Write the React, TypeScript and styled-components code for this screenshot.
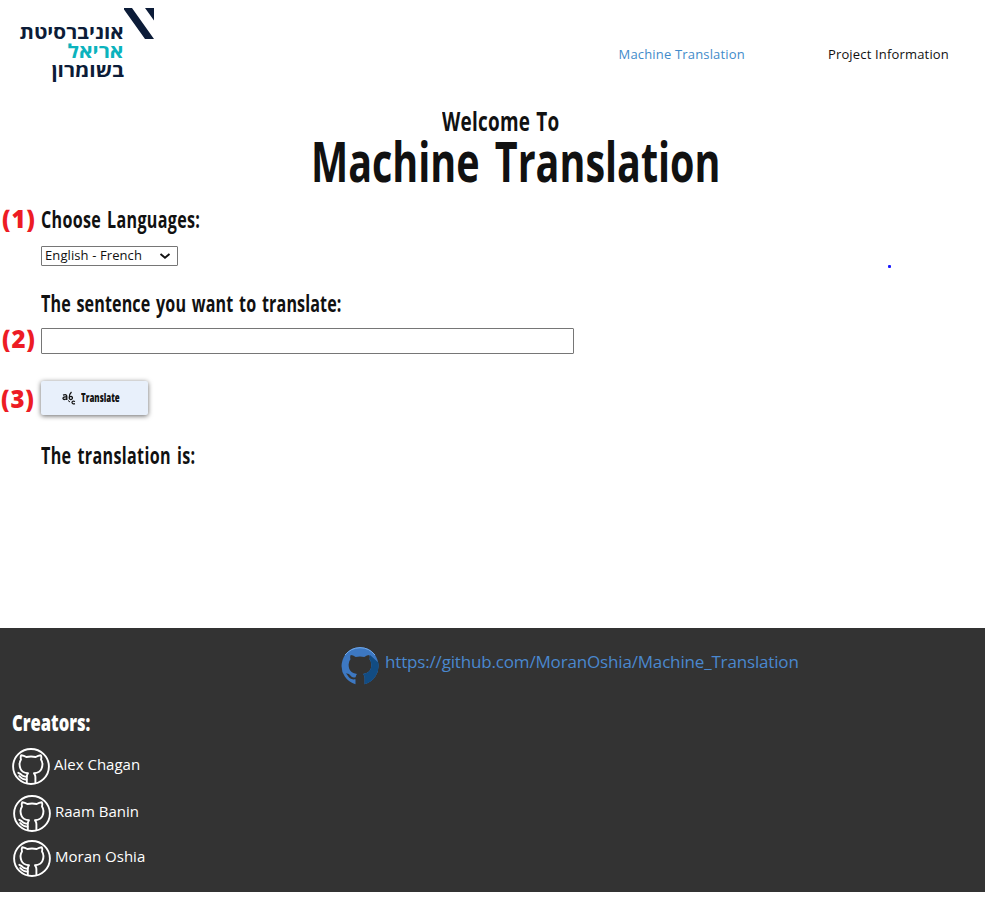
import React from "react";
import styled, { createGlobalStyle } from "styled-components";

const GlobalStyle = createGlobalStyle`
  * { box-sizing: border-box; }
  body { margin: 0; background: #fff; color: #111; font-family: "Open Sans", sans-serif; }
  a { text-decoration: none; color: inherit; }
  h1, h2, h3, p, ul { margin: 0; padding: 0; }
`;

const Page = styled.div`
  width: 985px;
  height: 899px;
  overflow: hidden;
`;

const Header = styled.header`
  display: flex;
  justify-content: space-between;
  height: 101px;
  padding: 8px 36px 0 20px;
`;

const Logo = styled.a`
  display: flex;
  width: 134px;
  height: 76px;
`;

const LogoWords = styled.div`
  display: flex;
  flex-direction: column;
  align-items: flex-end;
  width: 104px;
  padding-top: 15px;
`;

const LogoWord = styled.span<{ $teal?: boolean; $scale: number }>`
  height: 19px;
  font: 700 19px/19px "Open Sans", "DejaVu Sans", sans-serif;
  direction: rtl;
  white-space: nowrap;
  color: ${(p) => (p.$teal ? "#0bb3bd" : "#0c1c38")};
  transform: scaleX(${(p) => p.$scale});
  transform-origin: right;
`;

const Nav = styled.nav`
  display: flex;
  gap: 83px;
  padding-top: 37px;
`;

const NavLink = styled.a<{ $active?: boolean }>`
  font-size: 13px;
  line-height: 18px;
  letter-spacing: 0.17px;
  color: ${(p) => (p.$active ? "#428bca" : "#111")};
`;

const Display = styled.span<{
  $size: number;
  $scale: number;
  $heavy?: boolean;
  $tracking?: number;
  $wordGap?: number;
}>`
  display: block;
  width: max-content;
  font-size: ${(p) => p.$size}px;
  font-weight: ${(p) => (p.$heavy ? 800 : 700)};
  line-height: 1;
  letter-spacing: ${(p) => p.$tracking ?? 0}px;
  word-spacing: ${(p) => p.$wordGap ?? 0}px;
  white-space: nowrap;
  transform: scaleX(${(p) => p.$scale});
  transform-origin: left;
`;

const Welcome = styled.h2`
  height: 31px;
  padding: 6px 0 0 442px;
`;

const Title = styled.h1`
  height: 71px;
  padding-left: 311px;
`;

const Form = styled.main`
  display: grid;
  grid-template-columns: 41px 1fr;
  grid-template-rows: 43px 41px 36px 53px 63px 1fr;
  height: 425px;
  padding-top: 5px;
`;

const Marker = styled.span<{ $left?: number; $top?: number }>`
  padding: ${(p) => p.$top ?? 0}px 0 0 ${(p) => p.$left ?? 2}px;
  font-size: 24px;
  font-weight: 800;
  line-height: 22px;
  letter-spacing: 0.8px;
  color: #ed1c24;
  white-space: nowrap;
`;

const Label = styled.h3`
  grid-column: 2;
`;

const SelectRow = styled.div`
  grid-column: 2;
  display: flex;
  justify-content: space-between;
  padding-right: 94px;
`;

const Picker = styled.button`
  display: flex;
  align-items: center;
  justify-content: space-between;
  width: 137px;
  height: 20px;
  margin-top: -5px;
  padding: 0 6px 2px 3px;
  border: 1px solid #767676;
  border-radius: 1px;
  background: #fff;
  color: #111;
  font: 13px/18px "Open Sans", sans-serif;
  letter-spacing: 0.1px;
`;

const Dot = styled.i`
  width: 3px;
  height: 3px;
  margin-top: 14px;
  border-radius: 1px;
  background: #1a1aff;
`;

const SentenceInput = styled.input`
  width: 533px;
  height: 26px;
  border: 1px solid #767676;
  border-radius: 1px;
  background: #fff;
`;

const TranslateButton = styled.button`
  display: flex;
  align-items: center;
  gap: 5px;
  width: 107px;
  height: 34px;
  padding: 0 0 0 21px;
  border: 0;
  border-radius: 2px;
  background: #e8f0fb;
  box-shadow: 0 1px 5px rgba(0, 0, 0, 0.6);
  color: #111;
  font-family: "Open Sans", sans-serif;
`;

const Footer = styled.footer`
  height: 264px;
  padding: 19px 0 0 12px;
  background: #333;
  color: #fff;
`;

const RepoLink = styled.a`
  display: flex;
  gap: 6px;
  margin-left: 329px;
  height: 64px;
  font-size: 17px;
  line-height: 30px;
  letter-spacing: -0.165px;
  color: #4a88cf;
`;

const Creators = styled.ul`
  padding-top: 14px;
  list-style: none;
`;

const Creator = styled.li<{ $indent?: number; $height: number }>`
  display: flex;
  gap: 4px;
  height: ${(p) => p.$height}px;
  padding-left: ${(p) => p.$indent ?? 0}px;
  font-size: 15px;
  line-height: 32px;
`;

const LogoMark = () => (
  <svg width="30" height="32" viewBox="0 0 30 32" fill="#0c1c38">
    <path d="M-1 0H8L30 31H21ZM21 0H30V12.5Z" />
  </svg>
);

const Octocat = () => (
  <svg width="38" height="38" viewBox="0 0 38 38" fill="none" stroke="#fff" strokeWidth="1.9" strokeLinejoin="round" strokeLinecap="round">
    <ellipse cx="19" cy="18.5" rx="17.9" ry="17.5" />
    <path d="M14.8 35V29Q14.8 27 16 25.3C12 24.8 9.5 23.5 8.6 21Q6.3 15.5 9 11.5Q8.2 9 9.2 7.2Q12 7.6 14.3 9Q19 8 23.7 9Q26 7.6 28.8 7.2Q29.8 9 29 11.5Q31.7 15.5 29.4 21C28.5 23.5 26 24.8 22 25.3Q23.4 27 23.4 29V35" />
    <path d="M6.3 24.8Q8.5 25.6 9.8 27.2Q11.5 29 14.5 28.5M7.2 28Q10.5 31.8 14.5 31.6" />
  </svg>
);

const OctocatBadge = () => (
  <svg width="38" height="38" viewBox="0 0 38 38">
    <path fill="#3d78c2" d="M19 0A19 19 0 0 0 14.5 37.3V32.3C10 33 8.2 31.4 6.7 28.6Q5.8 27 4.9 26.5Q7.8 25.9 9.6 28.8Q11.2 31.3 14.6 30.2Q15 28 16 27C10.7 26 7.6 23.5 7.6 17.5Q7.6 14 9.5 12.2Q8.7 9.7 9.8 8Q12 8.1 14.7 10Q19 8.8 23.3 10Q26 8.1 28.2 8Q29.3 9.7 28.5 12.2Q30.4 14 30.4 17.5C30.4 23.5 27.3 26 22 27Q23.6 28.5 23.6 31V37.3A19 19 0 0 0 19 0Z" />
    <path fill="#124c83" d="M29 8L37.3 15.5A19 19 0 0 1 23.6 37.3V31Q23.6 28.5 22 27C27.3 26 30.4 23.5 30.4 17.5Q30.4 14 28.5 12.2Q29.2 10 29 8Z" />
    <path fill="none" stroke="#73aaea" strokeWidth="1" d="M4 8Q10 .8 19 .7T34 8" />
  </svg>
);

const TranslateIcon = () => (
  <svg width="14" height="14" viewBox="0 0 14 14" fill="none" stroke="#111" strokeWidth="1.3">
    <path d="M1 4.2Q4.8 2.8 4.8 5.5V9M4.8 6Q1 5.5 1 7.5Q1.6 9.5 4.8 7.5M9.5 1Q7.2 3 7.2 6.7M10.3 6.3A1.6 1.6 0 1 1 7.3 6.5A1.6 1.6 0 0 1 10.3 6.3M13 10.5Q10 9.5 10 11.5Q10.3 13.4 13 12.7" />
    <path strokeWidth="1" d="M6 9.5L8 11" />
  </svg>
);

const Chevron = () => (
  <svg width="12" height="8" viewBox="0 0 12 8" fill="none" stroke="#111" strokeWidth="1.9">
    <path d="M1.5 3L6 6.7L10.5 3" />
  </svg>
);

export default function App() {
  return (
    <Page>
      <GlobalStyle />
      <Header>
        <Logo href="#">
          <LogoWords>
            <LogoWord $scale={1.09}>אוניברסיטת</LogoWord>
            <LogoWord $teal $scale={1.11}>אריאל</LogoWord>
            <LogoWord $scale={1.1}>בשומרון</LogoWord>
          </LogoWords>
          <LogoMark />
        </Logo>
        <Nav>
          <NavLink $active href="#">Machine Translation</NavLink>
          <NavLink href="#">Project Information</NavLink>
        </Nav>
      </Header>
      <Welcome><Display $size={27} $scale={0.7} $tracking={0.4} $wordGap={1}>Welcome To</Display></Welcome>
      <Title><Display $size={56} $scale={0.705} $wordGap={7}>Machine Translation</Display></Title>
      <Form>
        <Marker>(1)</Marker>
        <Label><Display $size={23} $scale={0.7} $tracking={0.45} $wordGap={2}>Choose Languages:</Display></Label>
        <SelectRow>
          <Picker>English - French<Chevron /></Picker>
          <Dot />
        </SelectRow>
        <Label><Display $size={23} $scale={0.7} $tracking={0.17} $wordGap={2}>The sentence you want to translate:</Display></Label>
        <Marker>(2)</Marker>
        <SentenceInput />
        <Marker $left={1} $top={7}>(3)</Marker>
        <TranslateButton>
          <TranslateIcon />
          <Display $heavy $size={12} $scale={0.66}>Translate</Display>
        </TranslateButton>
        <Label><Display $size={23} $scale={0.7} $tracking={0.5} $wordGap={2}>The translation is:</Display></Label>
      </Form>
      <Footer>
        <RepoLink href="#"><OctocatBadge /><span>https://github.com/MoranOshia/Machine_Translation</span></RepoLink>
        <Display $heavy $size={23} $scale={0.72}>Creators:</Display>
        <Creators>
          <Creator $height={47}><Octocat />Alex Chagan</Creator>
          <Creator $height={45} $indent={1}><Octocat />Raam Banin</Creator>
          <Creator $height={45} $indent={1}><Octocat />Moran Oshia</Creator>
        </Creators>
      </Footer>
    </Page>
  );
}
